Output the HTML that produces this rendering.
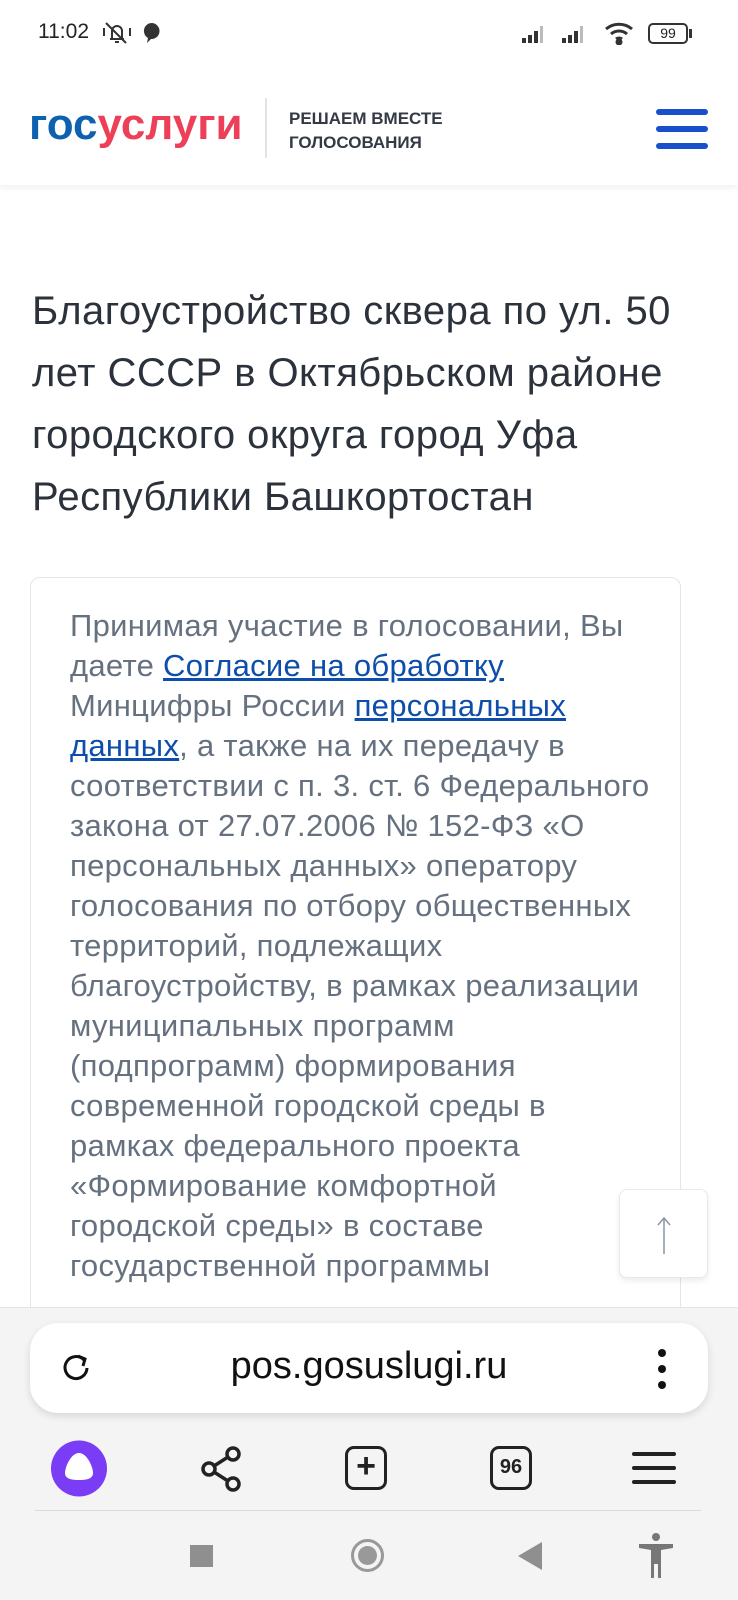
<!DOCTYPE html>
<html><head><meta charset="utf-8"><style>
*{margin:0;padding:0;box-sizing:border-box}
body{width:738px;height:1600px;overflow:hidden;background:#fff;font-family:"Liberation Sans","DejaVu Sans",sans-serif;position:relative}
.abs{position:absolute}
.status{top:0;left:0;width:738px;height:60px;font-size:21px;color:#222}
.hdr{top:60px;left:0;width:738px;height:125px;background:#fff;box-shadow:0 3px 6px rgba(0,0,0,.06)}
.title{left:32px;top:280px;font-size:40px;letter-spacing:0.45px;line-height:62px;color:#2c323c;white-space:nowrap}
.card{left:30px;top:577px;width:651px;height:760px;border:1px solid #e2e6ea;border-radius:10px}
.txt{left:70px;top:606px;font-size:31px;letter-spacing:0.3px;line-height:40px;color:#66717f;white-space:nowrap}
.txt a{color:#0c4eaa;text-decoration:underline}
.bar{left:0;top:1307px;width:738px;height:293px;background:#f4f4f4;border-top:1px solid #e4e4e4}
.pill{left:30px;top:1323px;width:678px;height:90px;background:#fff;border-radius:28px;box-shadow:0 3px 8px rgba(0,0,0,.12)}
</style></head><body>
<div class="abs status">
<span class="abs" style="left:38px;top:20px">11:02</span>
<svg class="abs" style="left:100px;top:20px" width="34" height="26" viewBox="0 0 34 26" fill="none" stroke="#333" stroke-width="2"><path d="M10 19h14M12 19V11a5 5 0 0 1 10 0v8M15 22h4M6 3l20 20M4 8v8M30 8v8"/></svg>
<svg class="abs" style="left:142px;top:22px" width="20" height="22" viewBox="0 0 20 22"><path d="M10 1a8 8 0 0 0-4 15l-1 5 4-4a8 8 0 1 0 1-16z" fill="#333"/></svg>
<svg class="abs" style="left:522px;top:24px" width="26" height="20" viewBox="0 0 26 20" fill="#333"><rect x="0" y="14" width="4" height="5"/><rect x="6" y="11" width="4" height="8"/><rect x="12" y="7" width="4" height="12"/><rect x="18" y="2" width="3" height="17" fill="#bbb"/></svg>
<svg class="abs" style="left:562px;top:24px" width="26" height="20" viewBox="0 0 26 20" fill="#333"><rect x="0" y="14" width="4" height="5"/><rect x="6" y="11" width="4" height="8"/><rect x="12" y="7" width="4" height="12"/><rect x="18" y="2" width="3" height="17" fill="#bbb"/></svg>
<svg class="abs" style="left:604px;top:21px" width="32" height="24" viewBox="0 0 32 24" fill="none" stroke="#333" stroke-width="3"><path d="M2 8a20 20 0 0 1 26 0M7 13a12 12 0 0 1 16 0M12 18a5 5 0 0 1 6 0"/><circle cx="15" cy="21" r="2" fill="#333"/></svg>
<div class="abs" style="left:648px;top:23px;width:40px;height:21px;border:2px solid #333;border-radius:5px;font-size:14px;text-align:center;line-height:17px">99</div>
<div class="abs" style="left:689px;top:29px;width:3px;height:9px;background:#333"></div>
</div>
<div class="abs hdr">
<div class="abs" style="left:29px;top:40px;font-size:44px;font-weight:bold;line-height:50px"><span style="color:#0d61af">гос</span><span style="color:#ee3f58">услуги</span></div>
<div class="abs" style="left:265px;top:38px;width:2px;height:60px;background:#e3e3e3"></div>
<div class="abs" style="left:289px;top:47px;font-size:17px;font-weight:bold;color:#333a44;line-height:24px">РЕШАЕМ ВМЕСТЕ<br>ГОЛОСОВАНИЯ</div>
<div class="abs" style="left:656px;top:49px;width:52px;height:6px;border-radius:3px;background:#1a4fcb"></div>
<div class="abs" style="left:656px;top:66px;width:52px;height:6px;border-radius:3px;background:#1a4fcb"></div>
<div class="abs" style="left:656px;top:83px;width:52px;height:6px;border-radius:3px;background:#1a4fcb"></div>
</div>
<div class="abs title">Благоустройство сквера по ул. 50<br>лет СССР в Октябрьском районе<br>городского округа город Уфа<br>Республики Башкортостан</div>
<div class="abs card"></div>
<div class="abs txt">Принимая участие в голосовании, Вы<br>даете <a>Согласие на обработку</a><br>Минцифры России <a>персональных</a><br><a>данных</a>, а также на их передачу в<br>соответствии с п. 3. ст. 6 Федерального<br>закона от 27.07.2006 № 152-ФЗ «О<br>персональных данных» оператору<br>голосования по отбору общественных<br>территорий, подлежащих<br>благоустройству, в рамках реализации<br>муниципальных программ<br>(подпрограмм) формирования<br>современной городской среды в<br>рамках федерального проекта<br>«Формирование комфортной<br>городской среды» в составе<br>государственной программы</div>
<div class="abs" style="left:619px;top:1189px;width:89px;height:89px;background:#fff;border:1px solid #e6e9ee;border-radius:8px;box-shadow:0 3px 6px rgba(0,0,0,.08)">
<svg class="abs" style="left:34px;top:26px" width="20" height="40" viewBox="0 0 20 40" fill="none" stroke="#8a95a3" stroke-width="1.5"><path d="M10 2v36M4 9l6-7 6 7"/></svg></div>
<div class="abs bar"></div>
<div class="abs pill">
<svg class="abs" style="left:28px;top:27px" width="36" height="36" viewBox="0 0 36 36" fill="none" stroke="#111" stroke-width="3"><path d="M26 10a11 11 0 1 0 3 8"/><path d="M20 6l7 3-2 7" fill="none"/></svg>
<div class="abs" style="left:0;width:678px;top:22px;text-align:center;font-size:38px;color:#111">pos.gosuslugi.ru</div>
<div class="abs" style="left:628px;top:26px;width:8px;height:8px;border-radius:50%;background:#111"></div>
<div class="abs" style="left:628px;top:42px;width:8px;height:8px;border-radius:50%;background:#111"></div>
<div class="abs" style="left:628px;top:58px;width:8px;height:8px;border-radius:50%;background:#111"></div>
</div>
<svg class="abs" style="left:51px;top:1440px" width="57" height="57" viewBox="0 0 57 57"><ellipse cx="28" cy="28.5" rx="28" ry="28" fill="#7b3cf5"/><path d="M28 13c-8 0-14 14-14 20 0 6 7 7 14 7s14-1 14-7c0-6-6-20-14-20z" fill="#fff"/></svg>
<svg class="abs" style="left:200px;top:1445px" width="44" height="48" viewBox="0 0 44 48" fill="none" stroke="#222" stroke-width="3.5"><circle cx="33" cy="9" r="6"/><circle cx="9" cy="24" r="6"/><circle cx="33" cy="39" r="6"/><path d="M14 21l14-9M14 27l14 9"/></svg>
<div class="abs" style="left:345px;top:1446px;width:42px;height:44px;border:3.5px solid #222;border-radius:9px;text-align:center;font-size:34px;line-height:34px;color:#222;font-weight:bold">+</div>
<div class="abs" style="left:490px;top:1446px;width:42px;height:44px;border:3.5px solid #222;border-radius:9px;text-align:center;font-size:20px;line-height:37px;color:#222;font-weight:bold">96</div>
<div class="abs" style="left:632px;top:1452px;width:44px;height:4px;background:#222;border-radius:2px"></div>
<div class="abs" style="left:632px;top:1466px;width:44px;height:4px;background:#222;border-radius:2px"></div>
<div class="abs" style="left:632px;top:1480px;width:44px;height:4px;background:#222;border-radius:2px"></div>
<div class="abs" style="left:35px;top:1510px;width:666px;height:1px;background:#ddd"></div>
<div class="abs" style="left:190px;top:1545px;width:23px;height:22px;background:#8f8f8f"></div>
<div class="abs" style="left:351px;top:1539px;width:33px;height:33px;border:3px solid #999;border-radius:50%"><div class="abs" style="left:4px;top:4px;width:19px;height:19px;border-radius:50%;background:#999"></div></div>
<svg class="abs" style="left:518px;top:1542px" width="24" height="28"><path d="M24 0v28L0 14z" fill="#8f8f8f"/></svg>
<svg class="abs" style="left:637px;top:1532px" width="38" height="48" viewBox="0 0 38 48" fill="#777"><circle cx="19" cy="5" r="4"/><path d="M2 12h34v4l-12 2v28h-3V32h-4v14h-3V18L2 16z"/></svg>
</body></html>
